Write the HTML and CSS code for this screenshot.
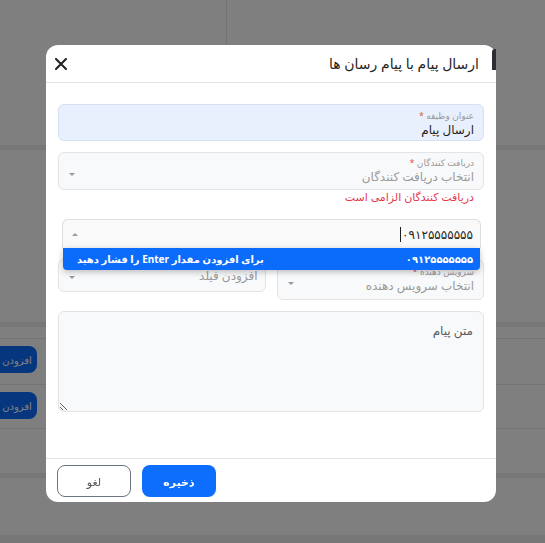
FILE: index.html
```html
<!DOCTYPE html>
<html lang="fa">
<head>
    <meta charset="UTF-8">
    <meta name="viewport" content="width=device-width, initial-scale=1.0">
    <title>ارسال پیام با پیام رسان ها</title>
    <link rel="stylesheet" href="styles.css">
</head>
<body>
    <!-- page behind the dialog -->
    <div class="page">
        <div class="page-head">
            <div class="page-head-side"></div>
        </div>
        <div class="page-fill top"></div>
        <div class="page-band"></div>
        <div class="page-fill middle"></div>
        <div class="page-band"></div>
        <div class="page-list">
            <div class="page-row"><button class="page-btn">افزودن</button></div>
            <div class="page-row"><button class="page-btn">افزودن</button></div>
        </div>
        <div class="page-fill lower"></div>
        <div class="page-band"></div>
        <div class="page-fill bottom"></div>
        <div class="page-foot"></div>
    </div>

    <!-- send message dialog -->
    <div class="backdrop">
        <div class="modal" dir="rtl">
            <div class="modal-tab"></div>
            <div class="modal-header">
                <h5 class="modal-title">ارسال پیام با پیام رسان ها</h5>
                <button class="modal-close" aria-label="بستن">
                    <svg width="12" height="12" viewBox="0 0 12 12">
                        <path d="M1 1L11 11M11 1L1 11" stroke="#1f1f1f" stroke-width="2" stroke-linecap="round"/>
                    </svg>
                </button>
            </div>

            <div class="modal-body">
                <div class="field filled">
                    <div class="field-label">عنوان وظیفه <span class="req">*</span></div>
                    <div class="field-value">ارسال پیام</div>
                </div>

                <div class="field select receivers">
                    <div class="field-text">
                        <div class="field-label">دریافت کنندگان <span class="req">*</span></div>
                        <div class="field-placeholder">انتخاب دریافت کنندگان</div>
                    </div>
                    <span class="caret-down"></span>
                </div>
                <div class="field-error">دریافت کنندگان الزامی است</div>

                <div class="phone-select">
                    <div class="phone-value">۰۹۱۲۵۵۵۵۵۵۵</div>
                    <span class="text-cursor"></span>
                    <span class="caret-up"></span>
                    <div class="phone-menu">
                        <span class="phone-option">۰۹۱۲۵۵۵۵۵۵۵</span>
                        <span class="phone-hint">برای افزودن مقدار Enter را فشار دهید</span>
                    </div>
                </div>

                <div class="field-row">
                    <div class="field select provider">
                        <div class="field-text">
                            <div class="field-label">سرویس دهنده <span class="req">*</span></div>
                            <div class="field-placeholder">انتخاب سرویس دهنده</div>
                        </div>
                        <span class="caret-down"></span>
                    </div>
                    <div class="field select single">
                        <div class="field-placeholder">افزودن فیلد</div>
                        <span class="caret-down"></span>
                    </div>
                </div>

                <textarea class="message" placeholder="متن پیام"></textarea>
            </div>

            <div class="modal-footer">
                <button class="btn btn-primary">ذخیره</button>
                <button class="btn btn-outline">لغو</button>
            </div>
        </div>
    </div>
</body>
</html>
```

FILE: styles.css
```css
* {
    box-sizing: border-box;
}

body {
    margin: 0;
    font-family: "Noto Sans", "DejaVu Sans", sans-serif;
    background: #fff;
    overflow: hidden;
}

/* background page */
.page-head {
    height: 45px;
}

.page-head-side {
    width: 227px;
    height: 100%;
    border-right: 1px solid #e2e2e2;
}

.page-fill.top { height: 100px; }
.page-fill.middle { height: 172px; }
.page-fill.lower { height: 44px; }
.page-fill.bottom { height: 57px; }

.page-band {
    height: 5px;
    background: #eeeeee;
}

.page-list {
    padding-top: 11px;
}

.page-row {
    height: 46px;
    border-top: 1px solid #e6e6e6;
    padding-top: 7px;
}

.page-row:last-child {
    height: 45px;
    border-bottom: 1px solid #e6e6e6;
}

.page-btn {
    margin-left: -9px;
    width: 46px;
    height: 27px;
    border: none;
    border-radius: 8px;
    background: #0d6efd;
    color: #fff;
    font-family: inherit;
    font-size: 10px;
    padding: 0 0 0 6px;
}

.page-foot {
    height: 8px;
    background: #eeeeee;
}

/* dialog */
.backdrop {
    position: fixed;
    inset: 0;
    background: rgba(0, 0, 0, 0.5);
    display: flex;
    align-items: flex-start;
    padding: 45px 0 0 46px;
}

.modal {
    position: relative;
    width: 450px;
    height: 457px;
    background: #fff;
    border-radius: 12px;
    display: flex;
    flex-direction: column;
}

.modal-tab {
    position: absolute;
    top: 4px;
    right: 0;
    width: 4px;
    height: 21px;
    background: #2c2d33;
    border-radius: 3px 0 0 0;
}

.modal-header {
    height: 38px;
    border-bottom: 1px solid #e3e3e3;
    display: flex;
    align-items: center;
    justify-content: space-between;
    padding: 0 17px 0 8px;
}

.modal-title {
    margin: 0;
    font-size: 14px;
    font-weight: 500;
    color: #1f1f1f;
}

.modal-close {
    border: none;
    background: none;
    padding: 0;
    width: 14px;
    height: 14px;
    display: flex;
    align-items: center;
    justify-content: center;
}

.modal-body {
    flex: 1;
    padding: 21px 12px 0;
}

.field {
    border: 1px solid #e3e3e3;
    border-radius: 6px;
    background: #f8f9fa;
    padding: 5px 9px 0;
}

.field.filled {
    height: 37px;
    background: #e8f0fe;
    border-color: #d6e0f0;
}

.field-label {
    font-size: 9px;
    line-height: 12px;
    color: #9a9a9a;
}

.req {
    color: #e5534b;
}

.field-value {
    font-size: 12px;
    line-height: 16px;
    color: #1f1f1f;
}

.field-placeholder {
    font-size: 12px;
    line-height: 16px;
    color: #9a9a9a;
}

.field.select {
    display: flex;
    align-items: center;
    justify-content: space-between;
    padding-left: 10px;
}

.field.receivers {
    height: 38px;
    margin-top: 11px;
    padding-top: 0;
}

.field-text {
    align-self: flex-start;
    padding-top: 4px;
}

.caret-down,
.caret-up {
    width: 0;
    height: 0;
    border-left: 3px solid transparent;
    border-right: 3px solid transparent;
}

.caret-down {
    border-top: 3px solid #9a9a9a;
    margin-top: 7px;
}

.caret-up {
    border-bottom: 3px solid #9a9a9a;
}

.field-error {
    padding-right: 10px;
    font-size: 11px;
    line-height: 14px;
    color: #e5394b;
}

.phone-select {
    position: relative;
    margin: 15px 3px 0 4px;
    height: 29px;
    border: 1px solid #dedede;
    border-bottom: none;
    border-radius: 6px 6px 0 0;
    background: #f9f9f9;
    display: flex;
    align-items: center;
    padding: 0 7px 0 9px;
}

.phone-value {
    font-size: 12px;
    color: #1f1f1f;
}

.text-cursor {
    width: 1px;
    height: 15px;
    background: #1f1f1f;
    margin-right: 1px;
}

.phone-select .caret-up {
    margin-right: auto;
}

.phone-menu {
    position: absolute;
    top: 100%;
    left: 0;
    right: 0;
    height: 22px;
    background: #0b6cfb;
    border-radius: 0 0 4px 4px;
    box-shadow: 0 2px 6px rgba(0, 0, 0, 0.25);
    display: flex;
    align-items: center;
    justify-content: space-between;
    padding: 0 7px 0 14px;
    color: #fff;
    font-size: 10px;
    font-weight: 700;
    z-index: 2;
}

.field-row {
    display: grid;
    grid-template-columns: 1fr 1fr;
    gap: 11px;
    align-items: start;
    margin-top: 11px;
}

.field.provider {
    height: 41px;
    padding-top: 0;
}

.field.provider .field-text {
    padding-top: 6px;
}

.field.single {
    height: 33px;
    padding: 0 7px 0 10px;
}

.field.single .caret-down {
    margin-top: 3px;
}

.message {
    display: block;
    width: 100%;
    height: 101px;
    margin-top: 11px;
    border: 1px solid #e3e3e3;
    border-radius: 6px;
    background: #f8f9fa;
    padding: 10px 10px;
    font-family: inherit;
    font-size: 12px;
    resize: vertical;
    outline: none;
}

.message::placeholder {
    color: #5a5a5a;
}

.modal-footer {
    height: 44px;
    border-top: 1px solid #e3e3e3;
    display: flex;
    justify-content: flex-end;
    align-items: flex-start;
    gap: 11px;
    padding: 6px 11px 0;
}

.btn {
    width: 74px;
    height: 32px;
    border-radius: 8px;
    font-family: inherit;
    font-size: 11px;
}

.btn-primary {
    border: none;
    background: #0d6efd;
    color: #fff;
    font-weight: 700;
}

.btn-outline {
    border: 1px solid #6c757d;
    background: #fff;
    color: #555;
}
```
